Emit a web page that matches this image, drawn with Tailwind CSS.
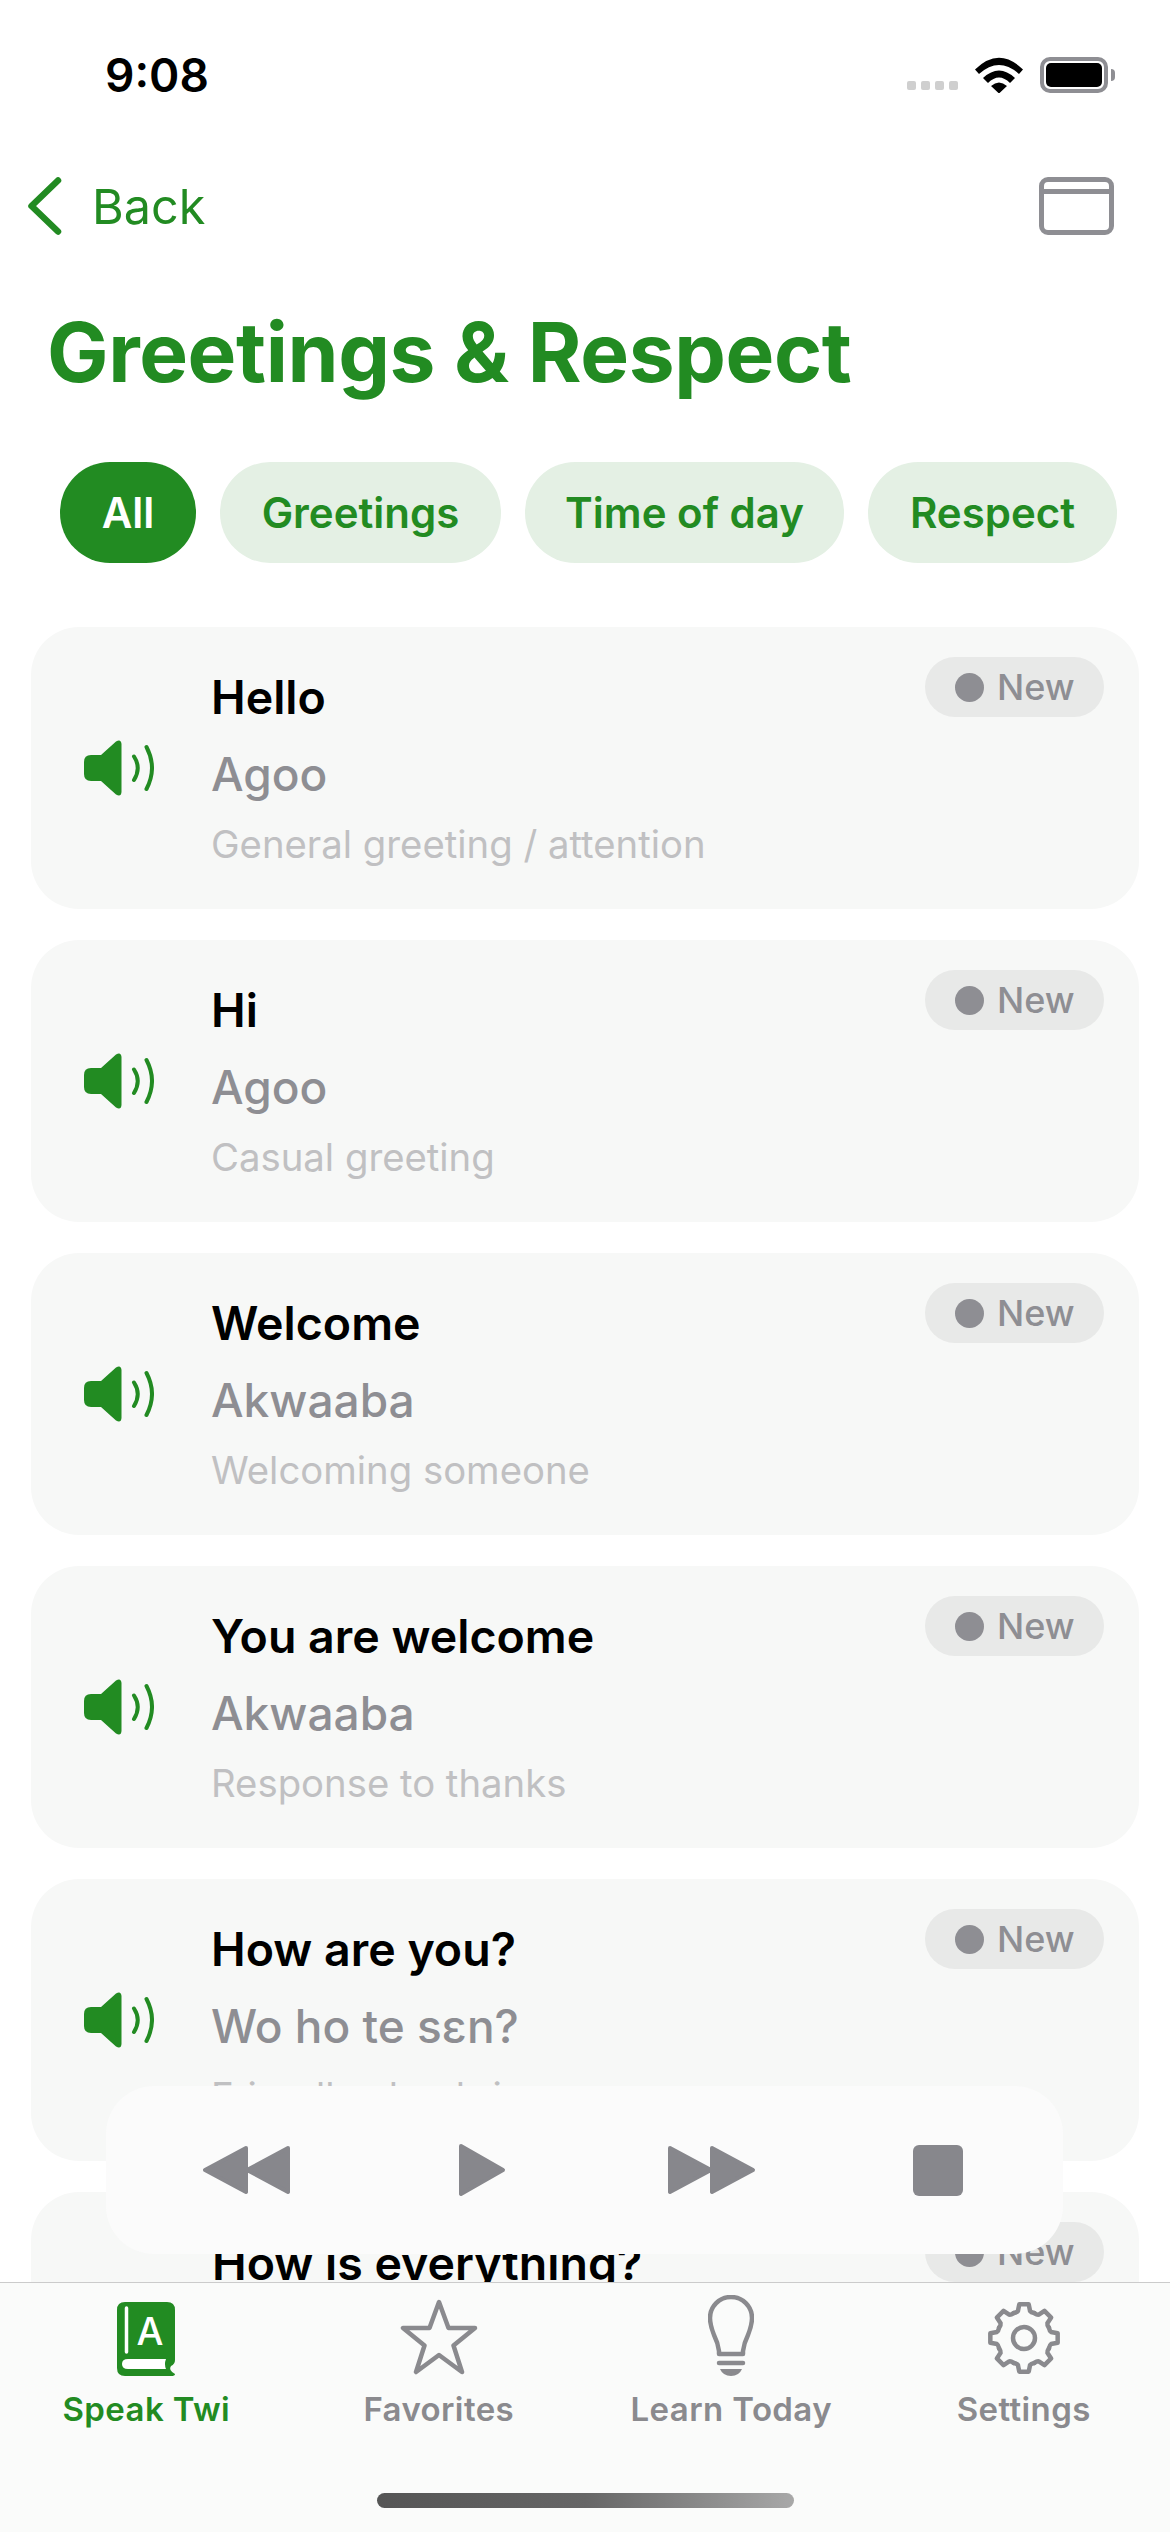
<!DOCTYPE html>
<html lang="en">
<head>
    <meta charset="UTF-8">
    <meta name="viewport" content="width=device-width, initial-scale=1.0">
    <title>Greetings &amp; Respect</title>
    <script src="https://cdn.jsdelivr.net/npm/@tailwindcss/browser@4"></script>
</head>
<body class="bg-white">
    <!-- shared icon -->
    <svg class="hidden" width="0" height="0">
        <symbol id="speaker" viewBox="0 0 70 56">
            <path d="M7 15H17L32 1.5Q37-1.5 37.5 4V52Q37 57.5 32 54.5L17 41H7Q0 41 0 34V22Q0 15 7 15Z" fill="#228b22"/>
            <path d="M50 16.5Q57.5 28 50 40M62.5 7Q73.5 28 62.5 49" fill="none" stroke="#228b22" stroke-width="4" stroke-linecap="round"/>
        </symbol>
    </svg>

    <div class="relative w-[1170px] h-[2532px] overflow-hidden bg-white font-['Inter',sans-serif]">
        <!-- status bar -->
        <div class="h-[150px] flex items-center pl-[105px] pr-[62px]">
            <span class="text-[46px] font-semibold text-black">9:08</span>
            <div class="ml-auto flex items-center">
                <div class="flex gap-[5px] mt-[21px]">
                    <span class="w-[9px] h-[9px] rounded-[2px] bg-[#cfcfcf]"></span>
                    <span class="w-[9px] h-[9px] rounded-[2px] bg-[#cfcfcf]"></span>
                    <span class="w-[9px] h-[9px] rounded-[2px] bg-[#cfcfcf]"></span>
                    <span class="w-[9px] h-[9px] rounded-[2px] bg-[#cfcfcf]"></span>
                </div>
                <svg class="ml-[17px]" width="48" height="36" viewBox="0 0 48 36">
                    <path d="M0 12.5Q24-11 48 12.5L44 17Q24-1 4 17Z M8 21Q24 6 40 21L35 26Q24 15 13 26Z M16 29Q24 22 32 29L24 36.5Z" fill="#000"/>
                </svg>
                <div class="relative ml-[17px] w-[68px] h-[36px] rounded-[10px] border-[4px] border-[#8e8e93] p-[2px]">
                    <div class="w-full h-full rounded-[5px] bg-black"></div>
                    <span class="absolute right-[-11px] top-[8px] w-[4px] h-[12px] rounded-r-[4px] bg-[#8e8e93]"></span>
                </div>
            </div>
        </div>

        <!-- nav -->
        <div class="h-[112px] flex items-center pl-[28px] pr-[56px]">
            <svg width="34" height="58" viewBox="0 0 34 58"><path d="M30 3.5 3.5 29 30 54.5" fill="none" stroke="#228b22" stroke-width="6.5" stroke-linecap="round" stroke-linejoin="round"/></svg>
            <span class="ml-[30px] mt-[2px] text-[48.5px] text-[#228b22]">Back</span>
            <div class="ml-auto w-[75px] h-[58px] rounded-[9px] border-[5px] border-[#8e8e93]">
                <div class="h-[7px] border-b-[5px] border-[#8e8e93] box-content"></div>
            </div>
        </div>

        <!-- title -->
        <h1 class="h-[180px] flex items-center pl-[47px] text-[82px] font-bold text-[#228b22] tracking-[-0.4px]">Greetings &amp; Respect</h1>

        <!-- filter chips -->
        <div class="mt-[20px] pl-[60px] flex gap-[24px] h-[101px] text-[42px] font-semibold">
            <div class="w-[136px] flex items-center justify-center rounded-[50px] bg-[#228b22] text-white">All</div>
            <div class="w-[281px] flex items-center justify-center rounded-[50px] bg-[#e4f0e4] text-[#228b22]">Greetings</div>
            <div class="w-[319px] flex items-center justify-center rounded-[50px] bg-[#e4f0e4] text-[#228b22]">Time of day</div>
            <div class="w-[249px] flex items-center justify-center rounded-[50px] bg-[#e4f0e4] text-[#228b22]">Respect</div>
        </div>

        <!-- phrase cards, cut off at the tab bar -->
        <div class="mt-[64px] h-[1655px] overflow-hidden px-[31px] flex flex-col gap-[31px]">
            <div class="relative h-[282px] shrink-0 flex items-center pl-[53px] rounded-[48px] bg-[#f7f8f7]">
                <svg width="70" height="56"><use href="#speaker"/></svg>
                <div class="ml-[57px] -mt-[3px]">
                    <div class="h-[70px] text-[46.5px] leading-[70px] font-semibold text-black">Hello</div>
                    <div class="h-[85px] text-[46px] leading-[85px] font-medium text-[#8e8e93]">Agoo</div>
                    <div class="h-[54px] text-[38.3px] leading-[54px] text-[#c0c0c2]">General greeting / attention</div>
                </div>
                <div class="absolute right-[35px] top-[30px] w-[179px] h-[60px] pl-[30px] flex items-center gap-[13px] rounded-[30px] bg-[#e8e9e8] text-[36px] font-medium text-[#8e8e93]"><span class="w-[29px] h-[29px] rounded-full bg-[#8e8e93]"></span>New</div>
            </div>
            <div class="relative h-[282px] shrink-0 flex items-center pl-[53px] rounded-[48px] bg-[#f7f8f7]">
                <svg width="70" height="56"><use href="#speaker"/></svg>
                <div class="ml-[57px] -mt-[3px]">
                    <div class="h-[70px] text-[46.5px] leading-[70px] font-semibold text-black">Hi</div>
                    <div class="h-[85px] text-[46px] leading-[85px] font-medium text-[#8e8e93]">Agoo</div>
                    <div class="h-[54px] text-[38.3px] leading-[54px] text-[#c0c0c2]">Casual greeting</div>
                </div>
                <div class="absolute right-[35px] top-[30px] w-[179px] h-[60px] pl-[30px] flex items-center gap-[13px] rounded-[30px] bg-[#e8e9e8] text-[36px] font-medium text-[#8e8e93]"><span class="w-[29px] h-[29px] rounded-full bg-[#8e8e93]"></span>New</div>
            </div>
            <div class="relative h-[282px] shrink-0 flex items-center pl-[53px] rounded-[48px] bg-[#f7f8f7]">
                <svg width="70" height="56"><use href="#speaker"/></svg>
                <div class="ml-[57px] -mt-[3px]">
                    <div class="h-[70px] text-[46.5px] leading-[70px] font-semibold text-black">Welcome</div>
                    <div class="h-[85px] text-[46px] leading-[85px] font-medium text-[#8e8e93]">Akwaaba</div>
                    <div class="h-[54px] text-[38.3px] leading-[54px] text-[#c0c0c2]">Welcoming someone</div>
                </div>
                <div class="absolute right-[35px] top-[30px] w-[179px] h-[60px] pl-[30px] flex items-center gap-[13px] rounded-[30px] bg-[#e8e9e8] text-[36px] font-medium text-[#8e8e93]"><span class="w-[29px] h-[29px] rounded-full bg-[#8e8e93]"></span>New</div>
            </div>
            <div class="relative h-[282px] shrink-0 flex items-center pl-[53px] rounded-[48px] bg-[#f7f8f7]">
                <svg width="70" height="56"><use href="#speaker"/></svg>
                <div class="ml-[57px] -mt-[3px]">
                    <div class="h-[70px] text-[46.5px] leading-[70px] font-semibold text-black">You are welcome</div>
                    <div class="h-[85px] text-[46px] leading-[85px] font-medium text-[#8e8e93]">Akwaaba</div>
                    <div class="h-[54px] text-[38.3px] leading-[54px] text-[#c0c0c2]">Response to thanks</div>
                </div>
                <div class="absolute right-[35px] top-[30px] w-[179px] h-[60px] pl-[30px] flex items-center gap-[13px] rounded-[30px] bg-[#e8e9e8] text-[36px] font-medium text-[#8e8e93]"><span class="w-[29px] h-[29px] rounded-full bg-[#8e8e93]"></span>New</div>
            </div>
            <div class="relative h-[282px] shrink-0 flex items-center pl-[53px] rounded-[48px] bg-[#f7f8f7]">
                <svg width="70" height="56"><use href="#speaker"/></svg>
                <div class="ml-[57px] -mt-[3px]">
                    <div class="h-[70px] text-[46.5px] leading-[70px] font-semibold text-black">How are you?</div>
                    <div class="h-[85px] text-[46px] leading-[85px] font-medium text-[#8e8e93]">Wo ho te sɛn?</div>
                    <div class="h-[54px] text-[38.3px] leading-[54px] text-[#c0c0c2]">Friendly check-in</div>
                </div>
                <div class="absolute right-[35px] top-[30px] w-[179px] h-[60px] pl-[30px] flex items-center gap-[13px] rounded-[30px] bg-[#e8e9e8] text-[36px] font-medium text-[#8e8e93]"><span class="w-[29px] h-[29px] rounded-full bg-[#8e8e93]"></span>New</div>
            </div>
            <div class="relative h-[282px] shrink-0 flex items-start pl-[181px] pt-[36px] rounded-[48px] bg-[#f7f8f7]">
                <div class="h-[70px] text-[46.5px] leading-[70px] font-semibold text-black">How is everything?</div>
                <div class="absolute right-[35px] top-[30px] w-[179px] h-[60px] pl-[30px] flex items-center gap-[13px] rounded-[30px] bg-[#e8e9e8] text-[36px] font-medium text-[#8e8e93]"><span class="w-[29px] h-[29px] rounded-full bg-[#8e8e93]"></span>New</div>
            </div>
        </div>

        <!-- audio player, floats over the list -->
        <div class="absolute left-[106px] top-[2086px] w-[957px] h-[168px] rounded-[48px] bg-[#fbfbfb] flex items-center pl-[96px]">
            <svg width="88" height="50" viewBox="0 0 88 50"><path d="M44 3 3 25 44 47ZM86 3 45 25 86 47Z" fill="#87878c" stroke="#87878c" stroke-width="4" stroke-linejoin="round"/></svg>
            <svg class="ml-[168px]" width="48" height="54" viewBox="0 0 48 54"><path d="M3 3 45 27 3 51Z" fill="#87878c" stroke="#87878c" stroke-width="4" stroke-linejoin="round"/></svg>
            <svg class="ml-[162px]" width="88" height="50" viewBox="0 0 88 50"><path d="M2 3 43 25 2 47ZM44 3 85 25 44 47Z" fill="#87878c" stroke="#87878c" stroke-width="4" stroke-linejoin="round"/></svg>
            <div class="ml-[157px] w-[50px] h-[51px] rounded-[6px] bg-[#87878c]"></div>
        </div>

        <!-- tab bar -->
        <div class="absolute left-0 bottom-0 w-full h-[250px] bg-[#fafbfa] border-t-[1.5px] border-[#cbcbcb] grid grid-cols-4">
            <div class="flex flex-col items-center text-[#228b22]">
                <div class="h-[94px] flex items-end pb-[1px]">
                    <svg width="58" height="74" viewBox="0 0 58 74">
                        <path d="M8 0H50Q58 0 58 8V58Q58 62 54 64Q51 68 58 72Q58 74 54 74H8Q0 74 0 66V8Q0 0 8 0Z" fill="#228b22"/>
                        <path d="M9.5 6V50" stroke="#fff" stroke-width="3.5" stroke-linecap="round"/>
                        <path d="M11 57H49Q47 62 49 67H11Q5 67 5 62Q5 57 11 57Z" fill="#fff"/>
                        <text x="33" y="43" text-anchor="middle" font-family="Inter" font-size="38" font-weight="500" fill="#fff">A</text>
                    </svg>
                </div>
                <span class="mt-[8px] text-[33px] font-semibold tracking-[0.4px]">Speak Twi</span>
            </div>
            <div class="flex flex-col items-center text-[#8a8a8e]">
                <div class="h-[94px] flex items-end pb-[2px]">
                    <svg width="78" height="76" viewBox="0 0 78 76"><path d="M39 3 48.5 29H75L53.5 46.5 62 73 39 56 16 73 24.5 46.5 3 29H29.5Z" fill="none" stroke="#8a8a8e" stroke-width="4.5" stroke-linejoin="round"/></svg>
                </div>
                <span class="mt-[8px] text-[33px] font-semibold tracking-[0.4px]">Favorites</span>
            </div>
            <div class="flex flex-col items-center text-[#8a8a8e]">
                <div class="h-[94px] flex items-end">
                    <svg width="46" height="82" viewBox="0 0 46 82">
                        <path d="M11 59V56Q10 48 6 40Q2 30 2 23A21 21 0 0 1 44 23Q44 30 40 40Q36 48 35 56V59Z" fill="none" stroke="#8a8a8e" stroke-width="4.5" stroke-linejoin="round"/>
                        <path d="M11 68H35" stroke="#8a8a8e" stroke-width="4.5" stroke-linecap="round"/>
                        <path d="M12 74H34Q31 81 23 81Q15 81 12 74Z" fill="#8a8a8e"/>
                    </svg>
                </div>
                <span class="mt-[8px] text-[33px] font-semibold tracking-[0.4px]">Learn Today</span>
            </div>
            <div class="flex flex-col items-center text-[#8a8a8e]">
                <div class="h-[94px] flex items-end pb-[1px]">
                    <svg width="76" height="76" viewBox="-38 -38 76 76">
                        <g fill="none" stroke="#8a8a8e" stroke-width="4.5" stroke-linecap="round" stroke-linejoin="round">
                            <path id="t" d="M-10.33-24.94Q-7-25.5-6.07-27L-4.73-33.67H4.73L6.07-27Q7-25.5 10.33-24.94"/>
                            <use href="#t" transform="rotate(45)"/>
                            <use href="#t" transform="rotate(90)"/>
                            <use href="#t" transform="rotate(135)"/>
                            <use href="#t" transform="rotate(180)"/>
                            <use href="#t" transform="rotate(225)"/>
                            <use href="#t" transform="rotate(270)"/>
                            <use href="#t" transform="rotate(315)"/>
                            <circle r="11"/>
                        </g>
                    </svg>
                </div>
                <span class="mt-[8px] text-[33px] font-semibold tracking-[0.4px]">Settings</span>
            </div>
        </div>

        <!-- home indicator -->
        <div class="absolute left-[377px] top-[2493px] w-[417px] h-[15px] rounded-full bg-gradient-to-r from-[#555555] via-[#666666] to-[#a8a8a8]"></div>
    </div>
</body>
</html>
